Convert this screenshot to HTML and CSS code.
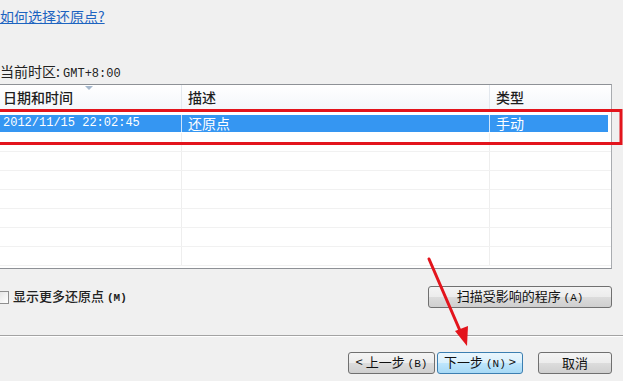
FILE: index.html
```html
<!DOCTYPE html>
<html lang="zh-CN">
<head>
    <meta charset="UTF-8">
    <title>系统还原</title>
    <link rel="stylesheet" href="styles.css">
</head>
<body>
    <div class="page">
        <a class="help" href="#">如何选择还原点?</a>
        <p class="tz">当前时区: <span class="num">GMT+8:00</span></p>

        <div class="list">
            <div class="list-head">
                <div class="col sorted">日期和时间</div>
                <div class="col">描述</div>
                <div class="col last">类型</div>
            </div>
            <div class="list-body">
                <div class="row sel">
                    <div class="cell num">2012/11/15 22:02:45</div>
                    <div class="cell">还原点</div>
                    <div class="cell last">手动</div>
                </div>
                <div class="row"><div class="cell"></div><div class="cell"></div><div class="cell last"></div></div>
                <div class="row"><div class="cell"></div><div class="cell"></div><div class="cell last"></div></div>
                <div class="row"><div class="cell"></div><div class="cell"></div><div class="cell last"></div></div>
                <div class="row"><div class="cell"></div><div class="cell"></div><div class="cell last"></div></div>
                <div class="row"><div class="cell"></div><div class="cell"></div><div class="cell last"></div></div>
                <div class="row"><div class="cell"></div><div class="cell"></div><div class="cell last"></div></div>
                <div class="row"><div class="cell"></div><div class="cell"></div><div class="cell last"></div></div>
            </div>
        </div>

        <div class="opts">
            <label class="check"><span class="box"></span><span class="check-text">显示更多还原点 <span class="key">(M)</span></span></label>
            <button class="btn scan" type="button">扫描受影响的程序 <span class="key">(A)</span></button>
        </div>

        <div class="sep"></div>

        <div class="actions">
            <button class="btn step" type="button">&lt; 上一步 <span class="key">(B)</span></button>
            <button class="btn step default" type="button">下一步 <span class="key">(N)</span> &gt;</button>
            <button class="btn cancel" type="button">取消</button>
        </div>

        <!-- annotation drawn on top of the screenshot -->
        <svg class="marks" width="623" height="381" viewBox="0 0 623 381">
            <rect x="-5" y="110.5" width="626" height="33" fill="none" stroke="#e3141c" stroke-width="3"/>
            <line x1="429" y1="259" x2="461" y2="333" stroke="#e3141c" stroke-width="3" stroke-linecap="round"/>
            <polygon points="467,346 455,331 468,326" fill="#e3141c"/>
        </svg>
    </div>
</body>
</html>
```

FILE: styles.css
```css
/* General Styles */
* {
    box-sizing: border-box;
}

body {
    margin: 0;
    background-color: #f0f0f0;
    font-family: "Noto Sans CJK SC", "Liberation Sans", sans-serif;
    font-size: 14px;
    color: #1a1a1a;
}

.page {
    position: relative;
    width: 623px;
    height: 381px;
    padding-right: 11px;
    overflow: hidden;
}

.num,
.key {
    font-family: "Liberation Mono", "DejaVu Sans Mono", monospace;
    font-size: 12px;
}

.key {
    font-size: 11px;
}

.help {
    display: block;
    width: max-content;
    height: 24px;
    padding-top: 8px;
    line-height: 16px;
    color: #1d64c0;
    text-decoration: underline;
}

.tz {
    height: 16px;
    margin: 39px 0 0 0;
    line-height: 16px;
    color: #222;
}

/* List view */
.list {
    margin: 5px 0 0 -4px;
    height: 185px;
    border: 1px solid #8e9196;
    border-right-color: #a9acb0;
    background-color: #ffffff;
}

.list-head,
.row {
    display: grid;
    grid-template-columns: 185px 308px 1fr;
}

.list-head {
    height: 25px;
    background: linear-gradient(#ffffff, #f3f6fa);
}

.col {
    position: relative;
    padding: 4px 0 0 6px;
    line-height: 16px;
    border-right: 1px solid #e3e8ee;
    color: #1e1e1e;
    font-weight: 500;
}

.col.last,
.cell.last {
    border-right: none;
}

.sorted::before {
    content: "";
    position: absolute;
    top: 1px;
    left: 88px;
    border-left: 4px solid transparent;
    border-right: 4px solid transparent;
    border-top: 4px solid #a6b8cc;
}

.list-body {
    padding-top: 4px;
}

.row {
    height: 19px;
    border-bottom: 1px solid #f1f1f1;
}

.cell {
    height: 18px;
    padding-left: 6px;
    line-height: 18px;
    border-right: 1px solid #eeeeee;
    white-space: nowrap;
}

.row.sel {
    padding: 1px 3px 1px 0;
    border-bottom-color: #ffffff;
}

.row.sel .cell {
    height: 17px;
    background-color: #3596f2;
    color: #ffffff;
    line-height: 16px;
    border-right-color: #cfe5fb;
}

/* Options row */
.opts {
    display: flex;
    justify-content: space-between;
    align-items: center;
    height: 22px;
    margin-top: 17px;
}

.check {
    display: flex;
    align-items: center;
    gap: 4px;
    height: 18px;
    font-size: 13px;
    font-weight: 500;
    color: #222;
}

.check-text {
    line-height: 18px;
}

.check .key {
    font-weight: bold;
}

.box {
    width: 9px;
    height: 13px;
    border: 1px solid #8f8f8f;
    border-left: none;
    background: linear-gradient(135deg, #e6e6e6, #ffffff);
}

.btn {
    height: 22px;
    padding: 0;
    border: 1px solid #707070;
    border-radius: 3px;
    background: linear-gradient(#f4f4f4 0%, #ececec 50%, #dcdcdc 51%, #cfcfcf 100%);
    font-family: inherit;
    font-size: 13px;
    color: #111;
    line-height: 18px;
}

.scan {
    width: 184px;
}

.sep {
    margin: 27px -11px 0 0;
    height: 2px;
    border-top: 1px solid #a3a3a3;
    border-bottom: 1px solid #ffffff;
}

/* Wizard buttons */
.actions {
    display: flex;
    justify-content: flex-end;
    height: 22px;
    margin-top: 15px;
}

.step {
    width: 87px;
    margin-right: 2px;
}

.step.default {
    width: 86px;
    margin-right: 15px;
    border-color: #3c7fb1;
    background: linear-gradient(#eaf6fd 0%, #d9f0fc 50%, #bee6fd 51%, #a7d9f5 100%);
}

.cancel {
    width: 74px;
}

.marks {
    position: absolute;
    top: 0;
    left: 0;
    pointer-events: none;
}
```
